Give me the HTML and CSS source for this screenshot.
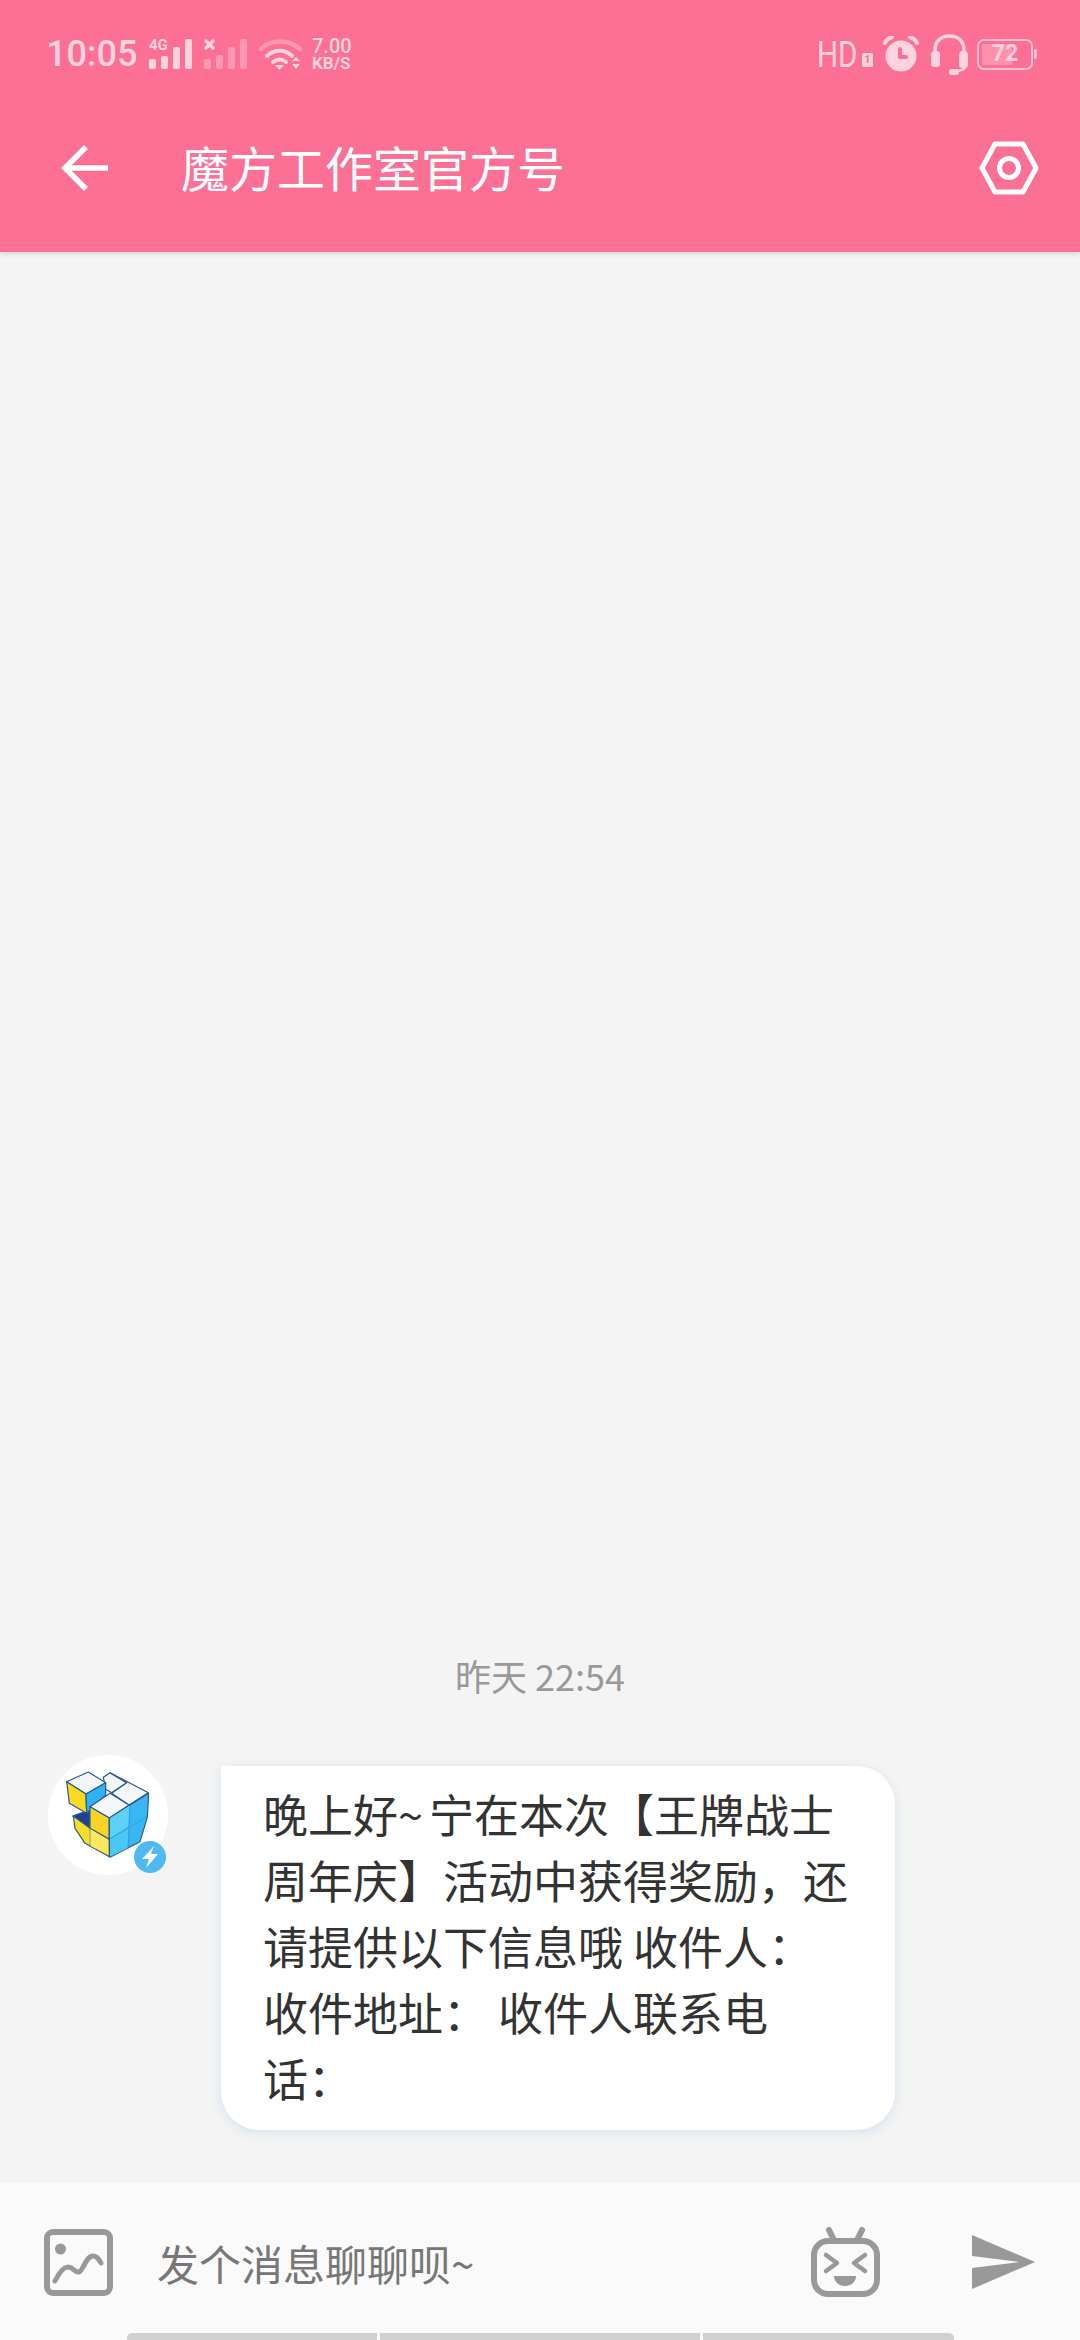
FILE: index.html

```html
<!DOCTYPE html>
<html lang="zh-CN">
<head>
  <meta charset="UTF-8" />
  <meta name="viewport" content="width=device-width, initial-scale=1.0" />
  <title>魔方工作室官方号</title>
  <link rel="stylesheet" href="styles.css">
</head>
<body>
  <div class="page">
    <header class="header">
      <div class="status">
        <div class="status-group">
          <span class="clock">10:05</span>
          <div class="signal">
            <span class="signal-label">4G</span>
            <svg width="43" height="30" viewBox="0 0 43 30"><g fill="#ffd2df"><rect x="0" y="20" width="7" height="10" rx="2"/><rect x="12" y="17" width="7" height="13" rx="2"/><rect x="24" y="8" width="7" height="22" rx="2"/><rect x="36" y="0" width="7" height="30" rx="2"/></g></svg>
          </div>
          <svg class="sim2" width="43" height="30" viewBox="0 0 43 30"><path d="M2 2l7 7M9 2l-7 7" stroke="#ffd2df" stroke-width="3.500" stroke-linecap="round"/><g fill="#ffd2df" fill-opacity="0.4"><rect x="0" y="20" width="7" height="10" rx="2"/><rect x="12" y="16" width="7" height="14" rx="2"/><rect x="24" y="8" width="7" height="22" rx="2"/><rect x="36" y="0" width="7" height="30" rx="2"/></g></svg>
          <svg class="wifi" width="43" height="33" viewBox="0 0 43 33" fill="none"><path d="M2 11C12 1 30 1 41 11" stroke="#ffd2df" stroke-opacity="0.4" stroke-width="4.500" stroke-linecap="round"/><path d="M8 18C15 11 26 11 33 18" stroke="#ffd2df" stroke-width="4" stroke-linecap="round"/><path d="M14 24C18 21 23 21 27 24" stroke="#ffd2df" stroke-width="4" stroke-linecap="round"/><path d="M16 27h9l-4.500 5zM33 23l4-4 4 4zM33 26h8l-4 5z" fill="#ffd2df"/></svg>
          <div class="speed">
            <span class="speed-value">7.00</span>
            <span class="speed-unit">KB/S</span>
          </div>
        </div>
        <div class="status-group">
          <span class="hd">HD</span>
          <span class="hd-slot">1</span>
          <svg class="alarm" width="36" height="36" viewBox="0 0 36 36"><circle cx="18" cy="20" r="15.500" fill="#ffd2df"/><path d="M17 13v8h6" fill="none" stroke="#fc7095" stroke-width="4" stroke-linecap="round" stroke-linejoin="round"/><path d="M2 7C3 4 6 2 9 1M34 7C33 4 30 2 27 1" fill="none" stroke="#ffd2df" stroke-width="4" stroke-linecap="round"/></svg>
          <svg class="headset" width="37" height="41" viewBox="0 0 37 41" fill="none"><path d="M4 18V16C4 7 10 2 18.500 2S33 7 33 16V18" stroke="#ffd2df" stroke-width="3.500"/><rect x="0" y="17" width="9" height="16" rx="3.500" fill="#ffd2df"/><rect x="28" y="17" width="9" height="17" rx="3.500" fill="#ffd2df"/><path d="M34 32C34 36 30 37 24 37" stroke="#ffd2df" stroke-width="2.500"/><rect x="18" y="35" width="10" height="6" rx="3" fill="#ffd2df"/></svg>
          <div class="battery">
            <span class="battery-level"></span>
            <span class="battery-text">72</span>
            <span class="battery-tip"></span>
          </div>
        </div>
      </div>
      <div class="toolbar">
        <svg class="back" width="47" height="48" viewBox="0 0 47 48" fill="none"><path d="M4 24H47M25 3L4 24L25 45" stroke="#fff" stroke-width="5.500" stroke-linejoin="miter"/></svg>
        <h1 class="title">魔方工作室官方号</h1>
        <svg class="settings" width="60" height="54" viewBox="0 0 60 54" fill="none"><path d="M3 27L16 3H44L57 27L44 51H16Z" stroke="#fff" stroke-width="5" stroke-linejoin="round"/><circle cx="30" cy="27" r="9.500" stroke="#fff" stroke-width="5"/></svg>
      </div>
    </header>

    <main class="messages">
      <div class="msg-time">昨天 22:54</div>
      <div class="msg-row">
        <div class="avatar">
          <svg width="120" height="120" viewBox="-36 -15 360 360">
            <g stroke="#27598f" stroke-width="3.500" stroke-linejoin="round">
              <path d="M130 52L150 38L200 68L155 98L137 88Z" fill="#f5f6fa"/>
              <path d="M200 68L150 38L265 98L207 135L155 100Z" fill="#f5f6fa"/>
              <path d="M38 168L88 150V205Z" fill="#1f3f96"/>
              <path d="M40 168L88 203L146 236L148 290L75 250L45 205Z" fill="#fbdc22"/>
              <path d="M20 65L85 36L137 68L78 102Z" fill="#f5f6fa"/>
              <path d="M20 65L78 102L80 160L28 130Z" fill="#fbd91e"/>
              <path d="M78 102L137 68V105L80 160Z" fill="#2fb0f2"/>
              <path d="M90 140L150 100L207 135L148 174Z" fill="#f5f6fa"/>
              <path d="M90 140L148 174V238L90 205Z" fill="#fad323"/>
              <path d="M148 174L266 100L262 172L240 245L150 292L148 238Z" fill="#38b8f2"/>
            </g>
            <path d="M150 175L208 137L205 200L150 235Z" fill="#5cd0f5"/>
            <path d="M150 238L205 205L202 265L150 290Z" fill="#4cc6f4"/>
            <path d="M92 208L146 240V285L92 258Z" fill="#fde75c"/>
            <path d="M210 137L205 262M150 236L262 170M90 205V262" stroke="#2a93d6" stroke-width="2" fill="none"/>
            <path d="M148 174V290" stroke="#27598f" stroke-width="3"/>
          </svg>
          <span class="avatar-badge">
            <svg width="32" height="32" viewBox="0 0 32 32"><path d="M20 5L8 18H15L12 27L24 13H17Z" fill="#fff"/></svg>
          </span>
        </div>
        <div class="bubble">晚上好<span class="tilde">~</span>宁在本次【王牌战士周年庆】活动中获得奖励，还请提供以下信息哦 收件人： 收件地址： 收件人联系电话：</div>
      </div>
    </main>

    <footer class="composer">
      <div class="composer-row">
        <svg class="icon-image" width="69" height="67" viewBox="0 0 69 67" fill="none"><rect x="3" y="3" width="63" height="61" rx="6" stroke="#999" stroke-width="6"/><circle cx="16.500" cy="20" r="5.500" fill="#999"/><path d="M11 52C15 44 19 38 24 38S31 44 35 43S42 27 49 27C53 27 55 30 57 34" stroke="#999" stroke-width="5" stroke-linecap="round"/></svg>
        <span class="placeholder">发个消息聊聊呗<span class="tilde">~</span></span>
        <svg class="icon-emoji" width="69" height="70" viewBox="0 0 69 70" fill="none"><rect x="3" y="14" width="63" height="53" rx="14" stroke="#999" stroke-width="6"/><path d="M18 3L23 13M51 3L46 13" stroke="#999" stroke-width="6" stroke-linecap="round"/><path d="M15 28L26 36L15 44M54 28L43 36L54 44" stroke="#999" stroke-width="4.500" stroke-linecap="round" stroke-linejoin="round"/><path d="M23 49H45C45 55 40 59 34 59S23 55 23 49Z" fill="#999"/></svg>
        <svg class="icon-send" width="63" height="54" viewBox="0 0 63 54"><path d="M0 0L63 27L0 54V33L47 27L0 21Z" fill="#999"/></svg>
      </div>
      <div class="nav-bars">
        <span class="nav-bar nav-bar-left"></span>
        <span class="nav-bar nav-bar-mid"></span>
        <span class="nav-bar nav-bar-right"></span>
      </div>
    </footer>
  </div>
</body>
</html>
```

FILE: styles.css

```css
body { margin: 0; background: #f4f4f4; font-family: "Noto Sans CJK SC", "Noto Sans", sans-serif; }
.page { display: flex; flex-direction: column; width: 1080px; height: 2340px; overflow: hidden; }

.header { background: #fc7095; box-shadow: 0 2px 5px rgba(0,0,0,0.12); position: relative; }
.status { display: flex; justify-content: space-between; align-items: center; height: 60px; padding: 24px 47px 0 46px; color: #ffd2df; font-family: Roboto, sans-serif; }
.status-group { display: flex; align-items: center; }
.clock { font-size: 36px; font-weight: 500; width: 103px; }
.signal { position: relative; display: flex; }
.signal-label { position: absolute; left: 0; top: 0; font-size: 15px; line-height: 13px; font-weight: 700; }
.sim2 { margin-left: 12px; }
.wifi { margin-left: 12px; }
.speed { display: flex; flex-direction: column; margin-left: 10px; font-weight: 500; }
.speed-value { font-size: 20px; line-height: 18px; }
.speed-unit { font-size: 17px; line-height: 16px; font-weight: 700; }
.hd { width: 41px; font-size: 37px; transform: scaleX(0.8); transform-origin: left; }
.hd-slot { margin: 12px 0 0 4px; width: 11px; height: 14px; background: #ffd2df; color: #fc7095; font-size: 11px; font-weight: 700; line-height: 14px; text-align: center; border-radius: 2px; }
.alarm { margin-left: 10px; }
.headset { margin-left: 12px; }
.battery { position: relative; box-sizing: border-box; width: 56px; height: 31px; margin-left: 9px; border: 2.500px solid #ffc0d2; border-radius: 7px; }
.battery-level { position: absolute; left: 3px; top: 3px; bottom: 3px; width: 30px; background: #ff90ae; border-radius: 2px; }
.battery-text { position: absolute; left: 0; right: 0; top: 0; font-size: 23px; line-height: 26px; font-weight: 700; text-align: center; }
.battery-tip { position: absolute; right: -6px; top: 8px; width: 3px; height: 10px; background: #ffc0d2; border-radius: 0 2px 2px 0; }

.toolbar { display: flex; align-items: center; height: 168px; padding: 0 41px 0 61px; }
.title { flex: 1; margin: 0 0 5px 73px; color: #fff; font-size: 48px; font-weight: 400; }

.messages { flex: 1; display: flex; flex-direction: column; justify-content: flex-end; padding-bottom: 53px; }
.msg-time { margin-bottom: 56px; color: #999; font-size: 36px; line-height: 48px; text-align: center; }
.msg-row { display: flex; align-items: flex-start; padding-left: 48px; }
.avatar { position: relative; width: 120px; height: 120px; background: #fff; border-radius: 50%; flex-shrink: 0; }
.avatar-badge { position: absolute; right: 2px; bottom: 2px; display: flex; width: 32px; height: 32px; background: #4fb9f2; border-radius: 50%; }
.bubble { box-sizing: border-box; width: 674px; margin: 11px 0 0 53px; padding: 15px 43px 19px 42px; background: #fff; border-radius: 0 38px 38px 38px; box-shadow: 0 3px 12px rgba(140,190,230,0.3); color: #333; font-size: 45px; line-height: 66px; }
.tilde { letter-spacing: 6px; }

.composer { display: flex; flex-direction: column; height: 157px; background: #fafafa; }
.composer-row { flex: 1; display: flex; align-items: center; padding: 8px 45px 0 44px; }
.placeholder { flex: 1; margin-left: 44px; color: #777; font-size: 42px; }
.icon-emoji { margin-right: 92px; }
.nav-bars { display: flex; gap: 3px; height: 7px; padding-left: 127px; }
.nav-bar { background: #d0d0d0; }
.nav-bar-left { width: 250px; border-radius: 5px 0 0 0; }
.nav-bar-mid { width: 320px; }
.nav-bar-right { width: 251px; border-radius: 0 5px 0 0; }
```
